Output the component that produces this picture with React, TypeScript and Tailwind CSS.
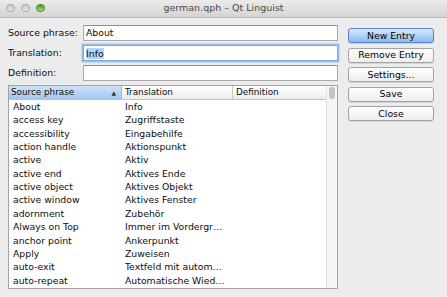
import React from "react";

const rows: [string, string][] = [
  ["About", "Info"],
  ["access key", "Zugriffstaste"],
  ["accessibility", "Eingabehilfe"],
  ["action handle", "Aktionspunkt"],
  ["active", "Aktiv"],
  ["active end", "Aktives Ende"],
  ["active object", "Aktives Objekt"],
  ["active window", "Aktives Fenster"],
  ["adornment", "Zubehör"],
  ["Always on Top", "Immer im Vordergr…"],
  ["anchor point", "Ankerpunkt"],
  ["Apply", "Zuweisen"],
  ["auto-exit", "Textfeld mit autom…"],
  ["auto-repeat", "Automatische Wied…"],
];

function Btn({ label, primary }: { label: string; primary?: boolean }) {
  return (
    <div
      className={
        primary
          ? "h-[15px] flex items-center justify-center rounded-[3px] border border-[#5b86c4] bg-gradient-to-b from-[#d6e8fc] to-[#88bbf0] text-black shadow-[0_1px_0_rgba(0,0,0,0.12)]"
          : "h-[15px] flex items-center justify-center rounded-[3px] border border-[#a2a2a2] bg-gradient-to-b from-[#ffffff] to-[#ededed] text-black shadow-[0_1px_0_rgba(0,0,0,0.1)]"
      }
    >
      {label}
    </div>
  );
}

export default function App() {
  return (
    <div
      className="w-[447px] h-[297px] bg-[#ececec] flex flex-col overflow-hidden text-[9.3px] text-[#0d0d0d]"
      style={{ fontFamily: '"DejaVu Sans", "Liberation Sans", sans-serif' }}
    >
      {/* title bar */}
      <div className="relative h-[18px] bg-gradient-to-b from-[#ebebeb] to-[#d4d4d4] border-b border-[#b9b9b9] flex items-center justify-center">
        <div className="absolute left-[6px] top-[3.5px] flex gap-[6.5px]">
          <div className="w-[8.5px] h-[8.5px] rounded-full bg-gradient-to-b from-[#c8c8c8] to-[#e6e6e6] border border-[#a9a9a9]" />
          <div className="w-[8.5px] h-[8.5px] rounded-full bg-gradient-to-b from-[#c8c8c8] to-[#e6e6e6] border border-[#a9a9a9]" />
          <div className="w-[8.5px] h-[8.5px] rounded-full bg-gradient-to-b from-[#3f9a1f] to-[#a9e36b] border border-[#4d8a2f]" />
        </div>
        <span className="text-[9.5px] text-[#4a4a4a]">german.qph – Qt Linguist</span>
      </div>

      {/* body */}
      <div className="flex pl-[8px] pt-[7px]">
        {/* left column */}
        <div className="w-[330px] flex flex-col">
          <div className="flex flex-col gap-[4px]">
            <div className="flex items-center h-[16px]">
              <span className="w-[75px]">Source phrase:</span>
              <div className="flex-1 h-[16px] bg-white border border-[#ababab] border-t-[#8e8e8e] flex items-center pl-[2px]">
                About
              </div>
            </div>
            <div className="flex items-center h-[16px]">
              <span className="w-[75px]">Translation:</span>
              <div className="flex-1 h-[16px] bg-white border border-[#7fa8dc] ring-[1.5px] ring-[#9bc1ee] flex items-center pl-[2px]">
                <span className="bg-[#b5d5ff] leading-[11px]">Info</span>
              </div>
            </div>
            <div className="flex items-center h-[16px]">
              <span className="w-[75px]">Definition:</span>
              <div className="flex-1 h-[16px] bg-white border border-[#ababab] border-t-[#8e8e8e]" />
            </div>
          </div>

          {/* table */}
          <div className="mt-[4px] h-[204px] bg-white border border-[#a3a3a3] flex overflow-hidden">
            <div className="flex-1 flex flex-col">
              <div className="h-[14px] flex border-b border-[#c2c2c2] text-[8.8px]">
                <div className="w-[113px] flex items-center justify-between pl-[2px] pr-[5px] bg-gradient-to-b from-[#cfe2f8] to-[#a3c7ef] border-r border-[#9fb8d8]">
                  <span>Source phrase</span>
                  <span className="text-[6px] text-[#333]">▲</span>
                </div>
                <div className="w-[111px] flex items-center pl-[3px] bg-gradient-to-b from-white to-[#ececec] border-r border-[#c8c8c8]">
                  Translation
                </div>
                <div className="flex-1 flex items-center pl-[3px] bg-gradient-to-b from-white to-[#ececec]">
                  Definition
                </div>
              </div>
              {rows.map(([s, t]) => (
                <div key={s} className="h-[13.4px] flex items-center">
                  <div className="w-[113px] pl-[4px] whitespace-nowrap overflow-hidden">{s}</div>
                  <div className="w-[111px] pl-[3px] whitespace-nowrap overflow-hidden">{t}</div>
                </div>
              ))}
            </div>
            <div className="w-[11px] bg-[#f5f5f5] border-l border-[#e2e2e2] flex justify-center pt-[1px]">
              <div className="w-[6px] h-[12px] rounded-full bg-[#c4c4c4]" />
            </div>
          </div>
        </div>

        {/* buttons */}
        <div className="ml-[10px] w-[86px] flex flex-col gap-[4.5px] pt-[3px]">
          <Btn label="New Entry" primary />
          <Btn label="Remove Entry" />
          <Btn label="Settings..." />
          <Btn label="Save" />
          <Btn label="Close" />
        </div>
      </div>
    </div>
  );
}
